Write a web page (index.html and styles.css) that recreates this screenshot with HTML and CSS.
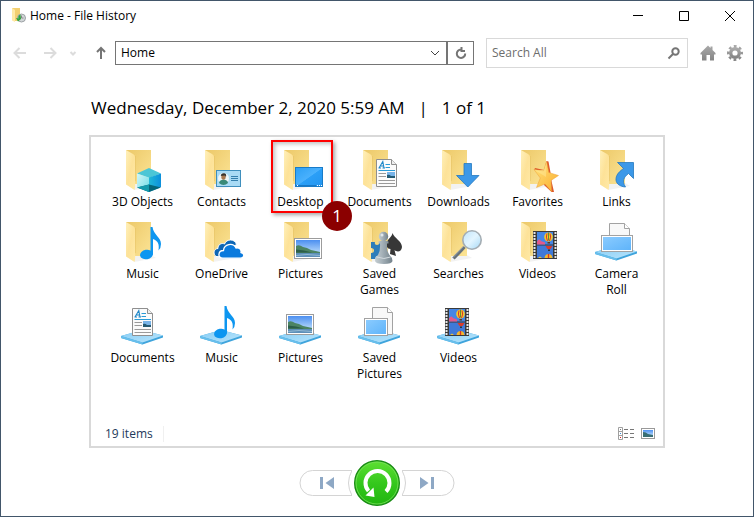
FILE: index.html
```html
<!DOCTYPE html>
<html lang="en">
<head>
<meta charset="utf-8">
<title>Home - File History</title>
<link rel="stylesheet" href="styles.css">
</head>
<body>
<svg class="defs" aria-hidden="true">
  <defs>
    <linearGradient id="gBack" x1="0" y1="0" x2="1" y2="1"><stop offset="0" stop-color="#ecc868"/><stop offset="1" stop-color="#fce495"/></linearGradient>
    <linearGradient id="gFlap" x1="0" y1="0" x2="1" y2="1"><stop offset="0" stop-color="#fff0ba"/><stop offset=".5" stop-color="#fde298"/><stop offset="1" stop-color="#ffe9a6"/></linearGradient>
    <linearGradient id="gBase" x1="0" y1="0" x2="1" y2="1"><stop offset="0" stop-color="#86cdf5"/><stop offset="1" stop-color="#b9e4fb"/></linearGradient>
    <linearGradient id="gBlue" x1="0" y1="0" x2="1" y2="1"><stop offset="0" stop-color="#8acbff"/><stop offset="1" stop-color="#5fb4fa"/></linearGradient>
    <linearGradient id="gDesk" x1="0" y1="0" x2="1" y2="1"><stop offset="0" stop-color="#2b9ff5"/><stop offset=".5" stop-color="#4ab1fd"/><stop offset=".52" stop-color="#2b9ff7"/><stop offset="1" stop-color="#2395f0"/></linearGradient>
    <linearGradient id="gSky" x1="0" y1="0" x2="0" y2="1"><stop offset="0" stop-color="#4c8ff0"/><stop offset="1" stop-color="#d9f1ff"/></linearGradient>
    <linearGradient id="gCubeL" x1="0" y1="0" x2="1" y2="1"><stop offset="0" stop-color="#d3f7f8"/><stop offset="1" stop-color="#6bdbe6"/></linearGradient>
    <linearGradient id="gCubeR" x1="0" y1="0" x2="1" y2="0"><stop offset="0" stop-color="#20b8d8"/><stop offset="1" stop-color="#0c8fdc"/></linearGradient>
    <linearGradient id="gStar" x1="0" y1="0" x2="1" y2="1"><stop offset="0" stop-color="#ffe680"/><stop offset="1" stop-color="#fbac2c"/></linearGradient>
    <linearGradient id="gPawn" x1="0" y1="0" x2="1" y2="0"><stop offset="0" stop-color="#c4cdd1"/><stop offset=".4" stop-color="#a6b2b9"/><stop offset="1" stop-color="#72818a"/></linearGradient>
    <linearGradient id="gLens" x1="0" y1="0" x2="1" y2="1"><stop offset="0" stop-color="#bfe4fb"/><stop offset=".5" stop-color="#e3f5ff"/><stop offset="1" stop-color="#a5d8f6"/></linearGradient>
    <linearGradient id="gGo" x1="0" y1="0" x2="0" y2="1"><stop offset="0" stop-color="#5ee033"/><stop offset=".5" stop-color="#35c81d"/><stop offset="1" stop-color="#20b50f"/></linearGradient>
    <linearGradient id="gGrey" x1="0" y1="0" x2="0" y2="1"><stop offset="0" stop-color="#a9a9a9"/><stop offset="1" stop-color="#858585"/></linearGradient>
  </defs>

  <symbol id="folder" viewBox="0 0 49 48">
    <path d="M16 44L38 40L33 37H16Z" fill="#e9e9e9" opacity=".6"/>
    <path d="M8 4H33V38H12Z" fill="url(#gBack)"/>
    <path d="M8 4L15 8Q17 9 17 11V35Q17.500 41 16.500 44L8 38.500Z" fill="url(#gFlap)"/>
    <path d="M17.500 10V35" stroke="#e2bc5d" stroke-width=".6" opacity=".6"/>
  </symbol>
  <symbol id="base" viewBox="0 0 49 48">
    <path d="M3 34L24 28L45 33.500V35.500L24.500 42.500L3 36Z" fill="#3fa4dc"/>
    <path d="M3 34L24 28L45 33.500L24.500 40.500Z" fill="url(#gBase)"/>
    <path d="M3 36L24.500 42.500V40.500L3 34Z" fill="#68bfec"/>
  </symbol>
  <symbol id="cube" viewBox="0 0 49 48">
    <path d="M31 22L43 27.500L31 32L19 27.500Z" fill="#4bc6d6"/>
    <path d="M19 27.500L31 31.500V46L19 41Z" fill="url(#gCubeL)"/>
    <path d="M43 27.500L31 31.500V46L43 41Z" fill="url(#gCubeR)"/>
    <path d="M19 41.500L31 38.500L43 41.500L31 46Z" fill="#04657a"/>
    <path d="M19 41.500L31 38.500V46Z" fill="#149bad"/>
  </symbol>
  <symbol id="card" viewBox="0 0 49 48">
    <rect x="19.500" y="24.500" width="24" height="16" fill="#a9dbf5" stroke="#3f8fbd"/>
    <circle cx="26.500" cy="32.500" r="5.500" fill="#eef6f8"/>
    <path d="M22 37Q22 34 26.500 33.500Q31 34 31 37Q29 39 26.500 39Q24 39 22 37Z" fill="#3a8a78"/>
    <ellipse cx="26.500" cy="31" rx="2.200" ry="2.800" fill="#a8784f"/>
    <path d="M23.800 30Q24 27 27 27.200Q29.800 27.500 29 31L28 29.500L25 29.800Z" fill="#33312e"/>
    <path d="M34 30.500H41M34 32.500H41M34 34.500H41" stroke="#3580ad"/>
  </symbol>
  <symbol id="screen" viewBox="0 0 49 48">
    <rect x="19.500" y="21.500" width="27" height="19" fill="url(#gDesk)" stroke="#187bc8"/>
    <path d="M20 39.500H40" stroke="#1878c6"/>
    <path d="M21 39.500H22M41 39.500H42M43 39.500H44M45 39.500H46" stroke="#fff"/>
  </symbol>
  <symbol id="doc" viewBox="0 0 49 48">
    <path d="M21.500 13.500H36.500L41.500 18.500V40.500H21.500Z" fill="#fbfbfb" stroke="#8f8f8f"/>
    <path d="M36.500 13.500V18.500H41.500" fill="#eee" stroke="#8f8f8f"/>
    <path d="M24 22L27.800 15.500L29 22M25.500 20H28.500M23.500 22H26M27.500 22H30" fill="none" stroke="#1d86c8" stroke-width="1.100"/>
    <path d="M30.500 18.500H35M30.500 21.500H35M23.500 24.500H40" stroke="#2a9bd6"/>
    <path d="M23.500 27.500H31M23.500 30.500H31M23.500 34.500H40M23.500 37.500H40" stroke="#9a9a9a"/>
    <rect x="32" y="26" width="8" height="6" fill="#79b4e8"/>
    <path d="M32 29Q34 28 36 30H40V32H32Z" fill="#245a73"/>
  </symbol>
  <symbol id="down" viewBox="0 0 49 48">
    <path d="M30 17.500H37.500V29.500H45L33.800 41L22.500 29.500H30Z" fill="#3c98e8" stroke="#2478bf" stroke-width=".8"/>
  </symbol>
  <symbol id="star" viewBox="0 0 49 48">
    <path d="M33.500 15L35.500 15.500L37.500 26.500L38.500 35L41 46L38.500 46L31 39L34 24L21 24L22 22L31 24Z" fill="#dd5a2c"/>
    <path d="M33.500 15.500L35.800 26.500L45.500 29.500L38 34.500L38.500 45.500L32 38L23.500 41.500L27.300 32L21 23.500L30.500 25Z" fill="url(#gStar)" stroke="#eda23c" stroke-width=".5"/>
    <path d="M33.500 15.500L33 31L21 23.500L30.500 25Z" fill="#fff0a8" opacity=".4"/>
  </symbol>
  <symbol id="link" viewBox="0 0 49 48">
    <path d="M25.500 16.500H41.500V32.500L36.500 27.500C32 31 29.500 35 33.500 41C27 40.500 23.500 37 24 32.500C24.500 28 28 25 31.500 22.500Z" fill="#3c98e8" stroke="#2478bf" stroke-width=".8"/>
  </symbol>
  <symbol id="note" viewBox="0 0 49 48">
    <ellipse cx="28.500" cy="36.500" rx="6.500" ry="4.700" fill="#0d96f0" transform="rotate(-10 28.500 36.500)"/>
    <path d="M32.500 9H34.500C35.500 17 43 19 43 26Q43 30 40.500 32.500C41.500 26 40 23 35 21V36.500H32.500Z" fill="#0d96f0"/>
  </symbol>
  <symbol id="cloud" viewBox="0 0 49 48">
    <path d="M19 38.500C15.500 36 17 30.500 21 30.500C20.500 26.500 25 24.500 27.500 26C29.500 20.500 38 20.500 39.500 26.500L34 30L26 39Z" fill="#0d66b5" stroke="#fff"/>
    <path d="M26 40.200C20 40.200 21 32.500 26.500 32.500C27 26 36 24 39 30C43 29.500 44.500 32 44 34.500C48 35 47.500 40.200 43.500 40.200Z" fill="#0a7add" stroke="#fff" stroke-width="1.300"/>
  </symbol>
  <symbol id="photo" viewBox="0 0 49 48">
    <rect x="18.500" y="20.500" width="27" height="20" fill="#fff" stroke="#9c9c9c"/>
    <rect x="20" y="22" width="24" height="17" fill="url(#gSky)"/>
    <path d="M20 28Q23 26 27 29Q31 29.500 35 32L42 33.500L44 34V35H20Z" fill="#4c8463"/>
    <path d="M20 31.500L28 32.500L36 34.500H20Z" fill="#2b5d49"/>
    <path d="M20 35H44V39H20Z" fill="#5d8fb8"/>
    <path d="M20 37.500Q30 35.500 44 37.500" fill="none" stroke="#94b9d3"/>
  </symbol>
  <symbol id="games" viewBox="0 0 49 48">
    <path d="M16 24H20Q19 27 22 27Q25 27 24 24H29V41H25Q25 37.500 22.500 38Q20 38 20.500 41H16V35Q19 35 19 32.500Q19 30 16 30Z" fill="#2e7dba"/>
    <path d="M37.500 15C39 20 47 23 47 29C46.500 34 42 34.500 39.500 32L41 38L35 36L35.500 31C32 31 31 28 32 24C33.500 20 37 19 37.500 15Z" fill="#373737"/>
    <circle cx="28.500" cy="18.500" r="4.700" fill="url(#gPawn)"/>
    <path d="M23.500 23.500Q28.500 21.500 33.500 23.500V25.500H32Q31.500 33 34.500 37Q37 39 37.500 43Q37 46 29 46Q20.500 46 20 43Q20 39 23 37Q25.500 33 25 25.500H23.500Z" fill="url(#gPawn)"/>
    <path d="M22 39Q29 42 35.500 39" fill="none" stroke="#d3dbdf"/>
    <circle cx="27" cy="17" r="1.500" fill="#e1e7ea"/>
  </symbol>
  <symbol id="lens" viewBox="0 0 49 48">
    <path d="M19.500 40.500L30.500 29" stroke="#66717a" stroke-width="3.200"/>
    <path d="M19 39.500L30 28" stroke="#9aa4ab"/>
    <circle cx="38" cy="22" r="9.200" fill="url(#gLens)" stroke="#a4adb3" stroke-width="1.600"/>
  </symbol>
  <symbol id="film" viewBox="0 0 49 48">
    <rect x="20" y="13" width="24" height="28" fill="#3a3a3a"/>
    <path d="M21.500 14V41M42.500 14V41" stroke="#e6e6e6" stroke-width="2" stroke-dasharray="2 1"/>
    <rect x="24" y="14" width="16" height="12.500" fill="#4586e6"/>
    <rect x="24" y="27.500" width="16" height="12.500" fill="#4079d8"/>
    <path d="M24 23.500Q26 20 28 23L32 24.500V26.500H24Z" fill="#e25a8c"/>
    <ellipse cx="35.500" cy="19" rx="4.300" ry="4.500" fill="#f5c92b"/>
    <path d="M34 15.500Q32.500 19 34.500 23M37 15.500Q38.500 19 36.500 23" stroke="#d5322d" fill="none"/>
    <path d="M35.500 14.500V22.500" stroke="#3b7d36" stroke-width=".8"/>
    <path d="M34.500 24H37V25.500H34.500Z" fill="#5b3a22"/>
    <path d="M32.500 28H39.500L37.500 31H34.500Z" fill="#d83b2c"/>
    <path d="M35 31.500H37V33H35Z" fill="#333"/>
    <path d="M31.500 40Q32 36 35.500 36Q39 36 39.500 40Z" fill="#f5b92b"/>
    <path d="M35.500 36V40" stroke="#d5322d" stroke-width="1.300"/>
    <path d="M25 40L27 38.500L29 40Z" fill="#e9c23a"/>
  </symbol>
  <symbol id="sheet" viewBox="0 0 49 48">
    <path d="M17.500 5.500H32.500L37.500 10.500V32.500H17.500Z" fill="#f8f8f8" stroke="#a2a2a2"/>
    <path d="M32.500 5.500V10.500H37.500" fill="#fff" stroke="#a2a2a2"/>
  </symbol>
</svg>

<div class="window">
  <header class="titlebar">
    <svg class="app-icon" viewBox="0 0 16 16" aria-hidden="true">
      <path d="M1 0H9V13H3Z" fill="#f2cf70"/><path d="M1 0L4 2V14L1 12.500Z" fill="#ffe9a6"/>
      <circle cx="10.500" cy="10" r="4" fill="#d2d6d8" stroke="#9da2a5"/><path d="M10.500 7.500V10H12.500" fill="none" stroke="#888"/>
      <path d="M9.500 6.500Q6.500 7.500 7.500 10.500L5 10L7 13.500L10 11" fill="#2ea43c"/>
    </svg>
    <h1 class="title">Home - File History</h1>
    <div class="caption">
      <button class="cap" aria-label="Minimize"><svg viewBox="0 0 12 12"><path d="M1 5.500H11"/></svg></button>
      <button class="cap" aria-label="Maximize"><svg viewBox="0 0 12 12"><path d="M1.500 1.500H10.500V10.500H1.500Z"/></svg></button>
      <button class="cap" aria-label="Close"><svg viewBox="0 0 12 12"><path d="M1 1L11 11M11 1L1 11"/></svg></button>
    </div>
  </header>

  <nav class="toolbar" aria-label="Navigation">
    <div class="arrows">
      <button class="nav faint" aria-label="Back" disabled><svg viewBox="0 0 14 14"><path d="M13 7H2M6.500 2L1.500 7L6.500 12"/></svg></button>
      <button class="nav faint" aria-label="Forward" disabled><svg viewBox="0 0 14 14"><path d="M1 7H12M7.500 2L12.500 7L7.500 12"/></svg></button>
      <button class="nav faint recent" aria-label="Recent locations" disabled><svg viewBox="0 0 14 14"><path d="M4.500 6L7 8.500L9.500 6"/></svg></button>
      <button class="nav" aria-label="Up"><svg viewBox="0 0 14 14"><path d="M7 13V2M3 6L7 2L11 6"/></svg></button>
    </div>
    <div class="address">
      <input class="address-text" type="text" value="Home" aria-label="Address">
      <button class="drop" aria-label="Previous locations"><svg viewBox="0 0 14 14"><path d="M3 5L7 9L11 5"/></svg></button>
      <button class="refresh" aria-label="Refresh"><svg viewBox="0 0 14 14"><path d="M7 3.500A4.200 4.200 0 1 0 11.200 7.500M7.500 1V5H11"/></svg></button>
    </div>
    <div class="search">
      <input class="search-text" type="text" placeholder="Search All" aria-label="Search All">
      <button class="find" aria-label="Search"><svg viewBox="0 0 14 14"><circle cx="8.500" cy="5.500" r="3.200"/><path d="M6 8L1.500 12.500"/></svg></button>
    </div>
    <button class="tool" aria-label="Home"><svg viewBox="0 0 16 16"><path d="M8 0.500L10.500 3V1.500H12.500V5L15.500 8V9.500H14V15.500H10V10H6.500V15.500H2V9.500H.5V8Z" fill="url(#gGrey)"/></svg></button>
    <button class="tool" aria-label="Settings"><svg viewBox="0 0 16 16"><g fill="none" stroke="url(#gGrey)"><circle cx="8" cy="8" r="4.300" stroke-width="3.400"/><circle cx="8" cy="8" r="6.800" stroke-width="2.400" stroke-dasharray="2.800 2.540" stroke-dashoffset="1.400"/></g></svg></button>
  </nav>

  <main class="content">
    <h2 class="version"><span>Wednesday, December 2, 2020 5:59 AM</span><span>|</span><span>1 of 1</span></h2>

    <section class="panel" aria-label="Backed up items">
      <ul class="items">
        <li><a class="item" href="#"><svg viewBox="0 0 49 48"><use href="#folder"/><use href="#cube"/></svg><span>3D Objects</span></a></li>
        <li><a class="item" href="#"><svg viewBox="0 0 49 48"><use href="#folder"/><use href="#card"/></svg><span>Contacts</span></a></li>
        <li class="marked"><a class="item" href="#"><svg viewBox="0 0 49 48"><use href="#folder"/><use href="#screen"/></svg><span>Desktop</span></a><div class="frame"></div><div class="step">1</div></li>
        <li><a class="item" href="#"><svg viewBox="0 0 49 48"><use href="#folder"/><use href="#doc"/></svg><span>Documents</span></a></li>
        <li><a class="item" href="#"><svg viewBox="0 0 49 48"><use href="#folder"/><use href="#down"/></svg><span>Downloads</span></a></li>
        <li><a class="item" href="#"><svg viewBox="0 0 49 48"><use href="#folder"/><use href="#star"/></svg><span>Favorites</span></a></li>
        <li><a class="item" href="#"><svg viewBox="0 0 49 48"><use href="#folder"/><use href="#link"/></svg><span>Links</span></a></li>

        <li><a class="item" href="#"><svg viewBox="0 0 49 48"><use href="#folder"/><use href="#note"/></svg><span>Music</span></a></li>
        <li><a class="item" href="#"><svg viewBox="0 0 49 48"><use href="#folder"/><use href="#cloud"/></svg><span>OneDrive</span></a></li>
        <li><a class="item" href="#"><svg viewBox="0 0 49 48"><use href="#folder"/><use href="#photo"/></svg><span>Pictures</span></a></li>
        <li><a class="item" href="#"><svg viewBox="0 0 49 48"><use href="#folder"/><use href="#games"/></svg><span>Saved<br>Games</span></a></li>
        <li><a class="item" href="#"><svg viewBox="0 0 49 48"><use href="#folder"/><use href="#lens"/></svg><span>Searches</span></a></li>
        <li><a class="item" href="#"><svg viewBox="0 0 49 48"><use href="#folder"/><use href="#film"/></svg><span>Videos</span></a></li>
        <li><a class="item" href="#"><svg viewBox="0 0 49 48"><use href="#base"/><use href="#sheet"/><rect x="9.500" y="17.500" width="31" height="16" fill="#fff" stroke="#a2a2a2"/><rect x="11" y="19" width="28" height="13" fill="url(#gBlue)"/></svg><span>Camera<br>Roll</span></a></li>

        <li><a class="item" href="#"><svg viewBox="0 0 49 48"><use href="#base"/><g transform="translate(-7 -7)"><use href="#doc"/></g></svg><span>Documents</span></a></li>
        <li><a class="item" href="#"><svg viewBox="0 0 49 48"><use href="#base"/><g transform="translate(-5 -5)"><use href="#note"/></g></svg><span>Music</span></a></li>
        <li><a class="item" href="#"><svg viewBox="0 0 49 48"><use href="#base"/><g transform="translate(-8 -8)"><use href="#photo"/></g></svg><span>Pictures</span></a></li>
        <li><a class="item" href="#"><svg viewBox="0 0 49 48"><use href="#base"/><use href="#sheet"/><rect x="9.500" y="16.500" width="23" height="17" fill="#fff" stroke="#a2a2a2"/><rect x="11" y="18" width="20" height="14" fill="url(#gBlue)"/></svg><span>Saved<br>Pictures</span></a></li>
        <li><a class="item" href="#"><svg viewBox="0 0 49 48"><use href="#base"/><g transform="translate(-9 -7)"><use href="#film"/></g></svg><span>Videos</span></a></li>
      </ul>
      <footer class="status">
        <span class="count">19 items</span>
        <button class="view" aria-label="Details view"><svg viewBox="0 0 16 14"><path d="M.5 .5H4.500V12.500H.5ZM.5 4.500H4.500M.5 8.500H4.500" fill="#fff" stroke="#a0a0a0"/><path d="M6 2.500H10M12 2.500H16M6 6.500H10M12 6.500H16M6 10.500H10M12 10.500H16" stroke="#777"/><path d="M2 2.500H3" stroke="#777"/><path d="M2 6.500H3" stroke="#3a8ede"/><path d="M2 10.500H3" stroke="#d22"/></svg></button>
        <button class="view" aria-label="Large icons view"><svg viewBox="0 0 16 14"><rect x="1.500" y="1.500" width="13" height="10" fill="#fff" stroke="#999"/><path d="M3 3H13V10H3Z" fill="url(#gSky)"/><path d="M3 5Q6 5 8 7L13 8V10H3Z" fill="#396e73"/></svg></button>
      </footer>
    </section>

    <div class="transport">
      <button class="skip" aria-label="Previous version"><svg viewBox="0 0 53 26"><path d="M53 .5H13.500A12.500 12.500 0 0 0 13.500 25.500H53Q46 13 53 .5Z" fill="#fff" stroke="#d4d4d4"/><path d="M21 7H24V19H21ZM35 7V19L26.500 13Z" fill="#8ea8c5"/></svg></button>
      <button class="restore" aria-label="Restore"><svg viewBox="0 0 46 46"><circle cx="23" cy="23" r="22.300" fill="url(#gGo)" stroke="#198b14" stroke-width="1.400"/><circle cx="23" cy="23" r="21" fill="none" stroke="#79e05a" stroke-width=".8"/><path d="M32 31.500A12 12 0 1 0 14.500 31" fill="none" stroke="#fff" stroke-width="4"/><path d="M11.500 35.500L20.500 37L19.500 27.500Z" fill="#fff"/></svg></button>
      <button class="skip" aria-label="Next version"><svg viewBox="0 0 53 26"><path d="M0 .5H39.500A12.500 12.500 0 0 1 39.500 25.500H0Q7 13 0 .5Z" fill="#fff" stroke="#d4d4d4"/><path d="M32 7H29V19H32ZM18 7V19L26.500 13Z" fill="#8ea8c5"/></svg></button>
    </div>
  </main>
</div>
</body>
</html>
```
FILE: styles.css
```css
* { box-sizing: border-box; }

body {
  margin: 0;
  background: #fff;
  color: #000;
  font: 12px/16px "Open Sans", "Noto Sans", sans-serif;
}

button, input {
  margin: 0;
  padding: 0;
  border: 0;
  background: none;
  color: inherit;
  font: inherit;
}

svg { display: block; }

.defs {
  position: absolute;
  width: 0;
  height: 0;
}

.window {
  display: flex;
  flex-direction: column;
  min-height: 100vh;
  border: 1px solid #42566a;
}

/* Title bar */
.titlebar {
  display: flex;
  align-items: center;
  height: 29px;
  padding-left: 10px;
}

.app-icon {
  width: 16px;
  height: 16px;
  margin-right: 3px;
}

.title {
  flex: 1;
  margin: 0;
  font-size: 12px;
  font-weight: 400;
  line-height: 16px;
}

.caption { display: flex; }

.cap {
  display: grid;
  place-items: center;
  width: 46px;
  height: 29px;
}

.cap svg {
  width: 12px;
  height: 12px;
  fill: none;
  stroke: #000;
}

/* Toolbar */
.toolbar {
  display: flex;
  align-items: center;
  height: 46px;
  padding: 0 10px 0 12px;
}

.arrows {
  display: flex;
  gap: 16px;
  width: 102px;
}

.nav { width: 14px; }

.recent { margin: 0 -2px 0 -7px; }

.nav svg, .drop svg, .refresh svg, .find svg {
  width: 14px;
  height: 14px;
  fill: none;
  stroke: #757575;
  stroke-width: 2;
}

.nav.faint svg { stroke: #dcdcdc; }

.address {
  display: flex;
  flex: 1;
  height: 24px;
  margin-right: 12px;
  border: 1px solid #757575;
}

.address-text {
  flex: 1;
  min-width: 0;
  padding: 0 5px;
}

.drop { width: 18px; }

.drop svg {
  stroke: #444;
  stroke-width: 1;
}

.refresh {
  display: grid;
  place-items: center;
  width: 27px;
  border-left: 2px solid #757575;
}

.search {
  display: flex;
  width: 202px;
  height: 30px;
  margin-right: 12px;
  border: 1px solid #d9d9d9;
}

.search-text {
  flex: 1;
  min-width: 0;
  padding-left: 5px;
}

.search-text::placeholder {
  color: #6d6d6d;
  opacity: 1;
}

.find { width: 20px; }

.tool { width: 16px; }

.tool + .tool { margin-left: 11px; }

/* Content */
.content {
  display: flex;
  flex: 1;
  flex-direction: column;
  padding: 20px 88px 10px;
}

.version {
  display: flex;
  gap: 14px;
  margin: 0 0 16px;
  padding-left: 2px;
  font-size: 17px;
  font-weight: 400;
  line-height: 23px;
}

.panel {
  display: flex;
  flex: 1;
  flex-direction: column;
  border: 2px solid #d9d9d9;
}

.items {
  display: grid;
  grid-template-columns: repeat(auto-fill, 79px);
  row-gap: 4px;
  margin: 0;
  padding: 9px 0 0 12px;
  list-style: none;
}

.item {
  display: flex;
  flex-direction: column;
  align-items: center;
  color: #000;
  text-align: center;
  text-decoration: none;
}

.item svg {
  width: 49px;
  height: 48px;
}

.item span { min-height: 20px; }

/* Callout over one item */
.marked { position: relative; }

.frame {
  position: absolute;
  inset: -6px 7px 1px 10px;
  border: 2px solid #f00;
  box-shadow: 2px 2px 4px rgb(0 0 0 / 35%), inset 2px 2px 4px rgb(0 0 0 / 25%);
  pointer-events: none;
}

.step {
  position: absolute;
  z-index: 1;
  top: 55px;
  left: 61px;
  width: 30px;
  height: 30px;
  border-radius: 50%;
  background: #8b0000;
  color: #fff;
  font-size: 17px;
  line-height: 30px;
  text-align: center;
}

.status {
  display: flex;
  align-items: center;
  gap: 6px;
  margin-top: auto;
  padding: 0 7px 4px 14px;
  color: #1e395b;
}

.count {
  margin-right: auto;
  padding-right: 10px;
  border-right: 1px solid #f0f0f0;
}

.view svg {
  width: 16px;
  height: 14px;
}

/* Version controls */
.transport {
  display: flex;
  align-items: center;
  justify-content: center;
  gap: 2px;
  padding-top: 12px;
}

.skip svg {
  width: 53px;
  height: 26px;
}

.restore svg {
  width: 46px;
  height: 46px;
}
```
